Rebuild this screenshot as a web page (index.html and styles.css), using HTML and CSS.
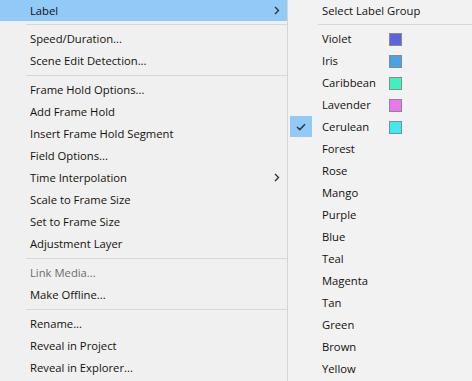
FILE: index.html
```html
<!DOCTYPE html>
<html lang="en">
<head>
    <meta charset="UTF-8">
    <title>Clip Context Menu</title>
    <link rel="stylesheet" href="styles.css">
</head>
<body>
    <div class="menu main-menu">
        <div class="item first active">Label
            <svg class="arrow" width="6" height="9" viewBox="0 0 6 9"><path d="M1 1 L4.5 4.5 L1 8" fill="none" stroke="#333" stroke-width="1.4"/></svg>
        </div>
        <div class="sep"></div>
        <div class="item">Speed/Duration...</div>
        <div class="item">Scene Edit Detection...</div>
        <div class="sep"></div>
        <div class="item">Frame Hold Options...</div>
        <div class="item">Add Frame Hold</div>
        <div class="item">Insert Frame Hold Segment</div>
        <div class="item">Field Options...</div>
        <div class="item">Time Interpolation
            <svg class="arrow" width="6" height="9" viewBox="0 0 6 9"><path d="M1 1 L4.5 4.5 L1 8" fill="none" stroke="#333" stroke-width="1.4"/></svg>
        </div>
        <div class="item">Scale to Frame Size</div>
        <div class="item">Set to Frame Size</div>
        <div class="item">Adjustment Layer</div>
        <div class="sep"></div>
        <div class="item disabled">Link Media...</div>
        <div class="item">Make Offline...</div>
        <div class="sep"></div>
        <div class="item">Rename...</div>
        <div class="item">Reveal in Project</div>
        <div class="item">Reveal in Explorer...</div>
    </div>

    <div class="menu sub-menu">
        <div class="item first">Select Label Group</div>
        <div class="sep"></div>
        <div class="item">Violet <span class="swatch" style="background:#5b63e0"></span></div>
        <div class="item">Iris <span class="swatch" style="background:#4aa3e6"></span></div>
        <div class="item">Caribbean <span class="swatch" style="background:#3df2bf"></span></div>
        <div class="item">Lavender <span class="swatch" style="background:#e977f0"></span></div>
        <div class="item checked">
            <span class="check">
                <svg width="10" height="8" viewBox="0 0 10 8"><path d="M1 4 L3.8 6.6 L9 1.2" fill="none" stroke="#2b3a4a" stroke-width="1.5"/></svg>
            </span>
            Cerulean <span class="swatch" style="background:#3ceaf5"></span>
        </div>
        <div class="item">Forest</div>
        <div class="item">Rose</div>
        <div class="item">Mango</div>
        <div class="item">Purple</div>
        <div class="item">Blue</div>
        <div class="item">Teal</div>
        <div class="item">Magenta</div>
        <div class="item">Tan</div>
        <div class="item">Green</div>
        <div class="item">Brown</div>
        <div class="item">Yellow</div>
    </div>
</body>
</html>
```

FILE: styles.css
```css
body {
    margin: 0;
    display: flex;
    height: 381px;
    overflow: hidden;
    background-color: #f0f0f0;
    font-family: "Open Sans", "Noto Sans", sans-serif;
    font-size: 11.25px;
    color: #14100e;
}

.menu {
    background-color: #f0f0f0;
}

.main-menu {
    width: 287px;
    border-right: 1px solid #d4d4d4;
}

.sub-menu {
    flex: 1;
    background-color: #f2f2f2;
}

.item {
    position: relative;
    height: 22px;
    line-height: 22px;
    padding-left: 30px;
    white-space: nowrap;
}

.sub-menu .item {
    padding-left: 34px;
}

.item.first {
    height: 21px;
    line-height: 21px;
}

.item.active {
    background-color: #91c9f7;
}

.item.disabled {
    color: #6d6d6d;
}

.arrow {
    position: absolute;
    right: 7px;
    top: 6px;
}

.sep {
    height: 7px;
    margin-left: 26px;
    position: relative;
}

.sub-menu .sep {
    margin-left: 30px;
}

.sep::after {
    content: "";
    position: absolute;
    left: 0;
    right: 0;
    top: 3px;
    height: 1px;
    background-color: #d7d7d7;
}

.swatch {
    position: absolute;
    left: 101px;
    top: 5px;
    width: 11px;
    height: 11px;
    border: 1px solid #8a8a8a;
}

.check {
    position: absolute;
    left: 2px;
    top: 0;
    width: 22px;
    height: 21px;
    background-color: #91c9f7;
    display: flex;
    align-items: center;
    justify-content: center;
}
```
